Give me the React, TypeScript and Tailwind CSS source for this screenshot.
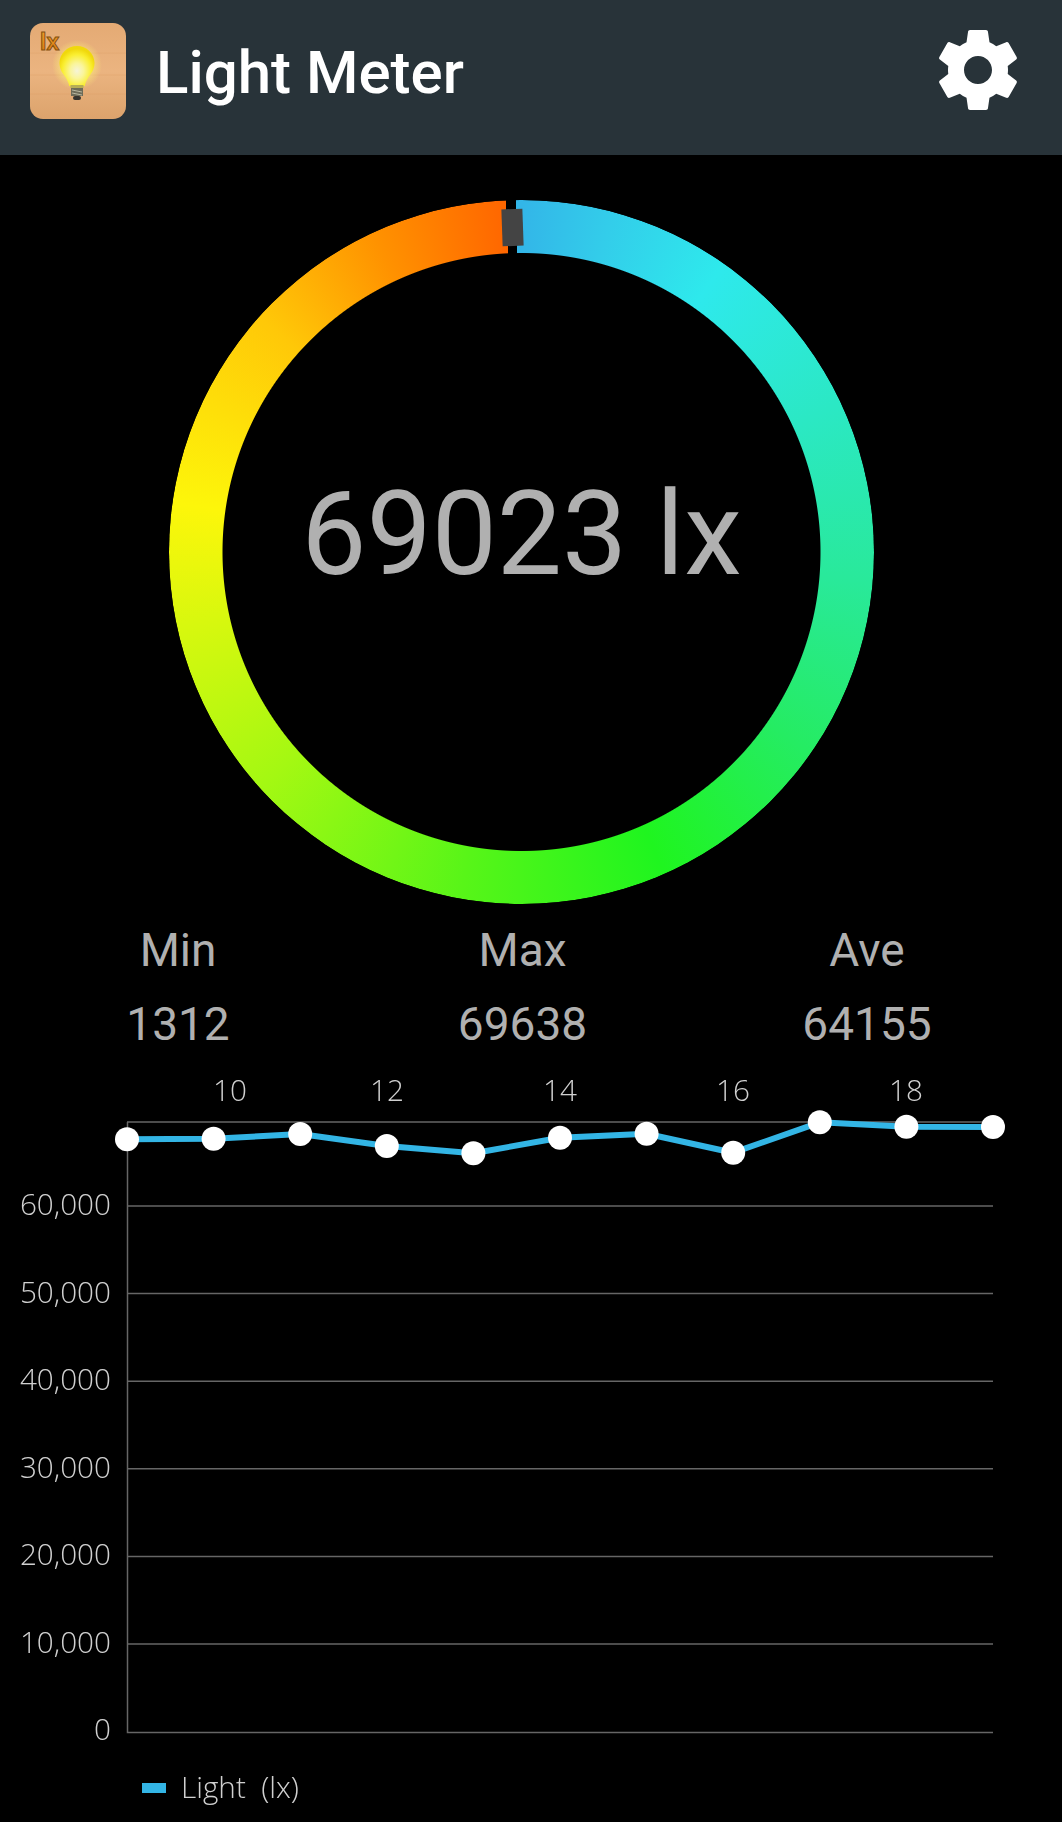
const xs = [127, 213.6, 300.2, 386.8, 473.4, 560, 646.6, 733.2, 819.8, 906.4, 993];
const ys = [1139.3, 1138.7, 1134, 1146, 1153.3, 1137.7, 1133.7, 1152.7, 1122.3, 1126.7, 1127];
const grid = [1206, 1293.6, 1381.2, 1468.8, 1556.4, 1644];
const yLabels = ["60,000", "50,000", "40,000", "30,000", "20,000", "10,000"];
const xLabels: [number, string][] = [[230, "10"], [387, "12"], [560, "14"], [733, "16"], [906, "18"]];
const OFF = 1060;

function AppIcon() {
  return (
    <svg width="96" height="96" viewBox="0 0 96 96" className="shrink-0">
      <defs>
        <linearGradient id="wood" x1="0" y1="0" x2="0" y2="1">
          <stop offset="0" stopColor="#e4aa74" />
          <stop offset="0.5" stopColor="#ebb480" />
          <stop offset="1" stopColor="#dca36c" />
        </linearGradient>
        <radialGradient id="bulb" cx="0.5" cy="0.62" r="0.55">
          <stop offset="0" stopColor="#f6f4d8" />
          <stop offset="0.35" stopColor="#faf59a" />
          <stop offset="0.75" stopColor="#faee30" />
          <stop offset="1" stopColor="#f0d80c" />
        </radialGradient>
        <radialGradient id="glow" cx="0.5" cy="0.5" r="0.5">
          <stop offset="0.6" stopColor="#fff27a" stopOpacity="0.55" />
          <stop offset="1" stopColor="#fff27a" stopOpacity="0" />
        </radialGradient>
        <linearGradient id="lx" x1="0" y1="0" x2="0" y2="1">
          <stop offset="0" stopColor="#f0a02a" />
          <stop offset="1" stopColor="#d9780f" />
        </linearGradient>
      </defs>
      <rect x="0" y="0" width="96" height="96" rx="13" fill="url(#wood)" />
      <path d="M0 30H96M0 52H96M0 71H96" stroke="#d99a60" strokeWidth="1" opacity="0.3" />
      <circle cx="47" cy="42" r="25" fill="url(#glow)" />
      <path d="M47 23c-9.500 0-17.500 7.500-17.500 17 0 7 4 11 6.500 15 1.800 3 2.800 5.500 3.200 8h15.600c.4-2.500 1.400-5 3.200-8 2.500-4 6.500-8 6.500-15 0-9.500-8-17-17.500-17z" fill="url(#bulb)" />
      <rect x="40.500" y="62" width="13" height="3" fill="#b6ad55" />
      <rect x="41" y="65" width="12" height="8" fill="#6d6b58" />
      <rect x="43" y="73" width="8" height="4" rx="2" fill="#35332e" />
      <path d="M42 67l10 2M42 70l10 2" stroke="#b9b7a0" strokeWidth="1" />
      <text x="10" y="27" fontFamily="'Liberation Sans', sans-serif" fontWeight="700" fontSize="23" fill="url(#lx)" stroke="#85500f" strokeWidth="1">lx</text>
    </svg>
  );
}

function Stat({ label, value }: { label: string; value: string }) {
  return (
    <div className="flex flex-col items-center gap-[21px] w-[200px]">
      <span className="leading-[53px]">{label}</span>
      <span className="leading-[53px]">{value}</span>
    </div>
  );
}

export default function App() {
  return (
    <div className="w-[1062px] h-[1822px] bg-black overflow-hidden font-['Roboto',sans-serif] text-[#b0b0b0]">
      <header className="h-[155px] bg-[#283339] flex items-center pl-[30px] pr-[36px] pb-[13px]">
        <AppIcon />
        <h1 className="ml-[30px] mt-[4px] text-[60px] font-medium text-white flex-1 leading-none">Light Meter</h1>
        <svg width="96" height="96" viewBox="0 0 24 24" fill="#ffffff" className="mt-[-3px]">
          <path d="M19.43 12.98c.04-.32.07-.64.07-.98s-.03-.66-.07-.98l2.11-1.65c.19-.15.24-.42.12-.64l-2-3.46c-.12-.22-.39-.3-.61-.22l-2.49 1c-.52-.4-1.08-.73-1.69-.98l-.38-2.65C14.46 2.18 14.25 2 14 2h-4c-.25 0-.46.18-.49.42l-.38 2.65c-.61.25-1.17.59-1.69.98l-2.49-1c-.23-.09-.49 0-.61.22l-2 3.46c-.13.22-.07.49.12.64l2.11 1.65c-.04.32-.07.65-.07.98s.03.66.07.98l-2.11 1.65c-.19.15-.24.42-.12.64l2 3.46c.12.22.39.3.61.22l2.49-1c.52.4 1.08.73 1.69.98l.38 2.65c.03.24.24.42.49.42h4c.25 0 .46-.18.49-.42l.38-2.65c.61-.25 1.17-.59 1.69-.98l2.49 1c.23.09.49 0 .61-.22l2-3.46c.12-.22.07-.49-.12-.64l-2.11-1.65zM12 15.500c-1.930 0-3.500-1.570-3.500-3.500s1.570-3.500 3.500-3.500 3.500 1.570 3.500 3.500-1.570 3.500-3.500 3.500z" />
        </svg>
      </header>

      <div className="flex justify-center mt-[45px] pr-[19px]">
        <div className="relative w-[705px] h-[704px]">
          <div className="absolute inset-0 rounded-full bg-[conic-gradient(from_0deg,#000_0deg,#33b6e8_0deg,#33cdea_15deg,#2ee9ec_35deg,#2be8c4_65deg,#29e99a_95deg,#25ec62_125deg,#1ff51f_156deg,#58f518_190deg,#a4f812_228deg,#d8f80e_258deg,#fdf60a_278deg,#ffc808_312deg,#ff9200_335deg,#ff6600_357.4deg,#000_357.4deg,#000_359.100deg,#33b6e8_359.100deg)] [mask-image:radial-gradient(circle,transparent_298.500px,black_299.500px)]" />
          <div className="absolute left-[333px] top-[8.500px] w-[21px] h-[37px] bg-[#444444] -rotate-[2deg]" />
          <div className="absolute inset-0 flex items-center justify-center pb-[36px]">
            <span className="text-[116px] font-normal leading-none">69023 lx</span>
          </div>
        </div>
      </div>

      <div className="flex justify-between pl-[78px] pr-[95px] mt-[20px] text-[46px]">
        <Stat label="Min" value="1312" />
        <Stat label="Max" value="69638" />
        <Stat label="Ave" value="64155" />
      </div>

      <svg width="1062" height="762" viewBox={`0 ${OFF} 1062 762`} className="block mt-[9px] [will-change:transform]" fontFamily="'Open Sans', sans-serif" fontWeight="300" fontSize="29.700" fill="#d0d0d0">
        {xLabels.map(([x, t]) => (
          <text key={t} x={x} y="1101" textAnchor="middle">{t}</text>
        ))}
        <path d="M127.500 1122V1732.500H993" fill="none" stroke="#666666" strokeWidth="1.500" />
        <path d="M127 1122H993" stroke="#666666" strokeWidth="1.500" />
        {grid.map((y, i) => (
          <g key={y}>
            <path d={`M127 ${y}H993`} stroke="#666666" strokeWidth="1.500" />
            <text x="111" y={y + 9} textAnchor="end">{yLabels[i]}</text>
          </g>
        ))}
        <text x="111" y="1740" textAnchor="end">0</text>
        <polyline points={xs.map((x, i) => `${x},${ys[i]}`).join(" ")} fill="none" stroke="#33b5e5" strokeWidth="6" strokeLinejoin="round" />
        {xs.map((x, i) => (
          <circle key={x} cx={x} cy={ys[i]} r="12" fill="#ffffff" />
        ))}
        <rect x="142" y="1783" width="24" height="10" fill="#33b5e5" />
        <text x="181" y="1798" xmlSpace="preserve">Light  (lx)</text>
      </svg>
    </div>
  );
}
